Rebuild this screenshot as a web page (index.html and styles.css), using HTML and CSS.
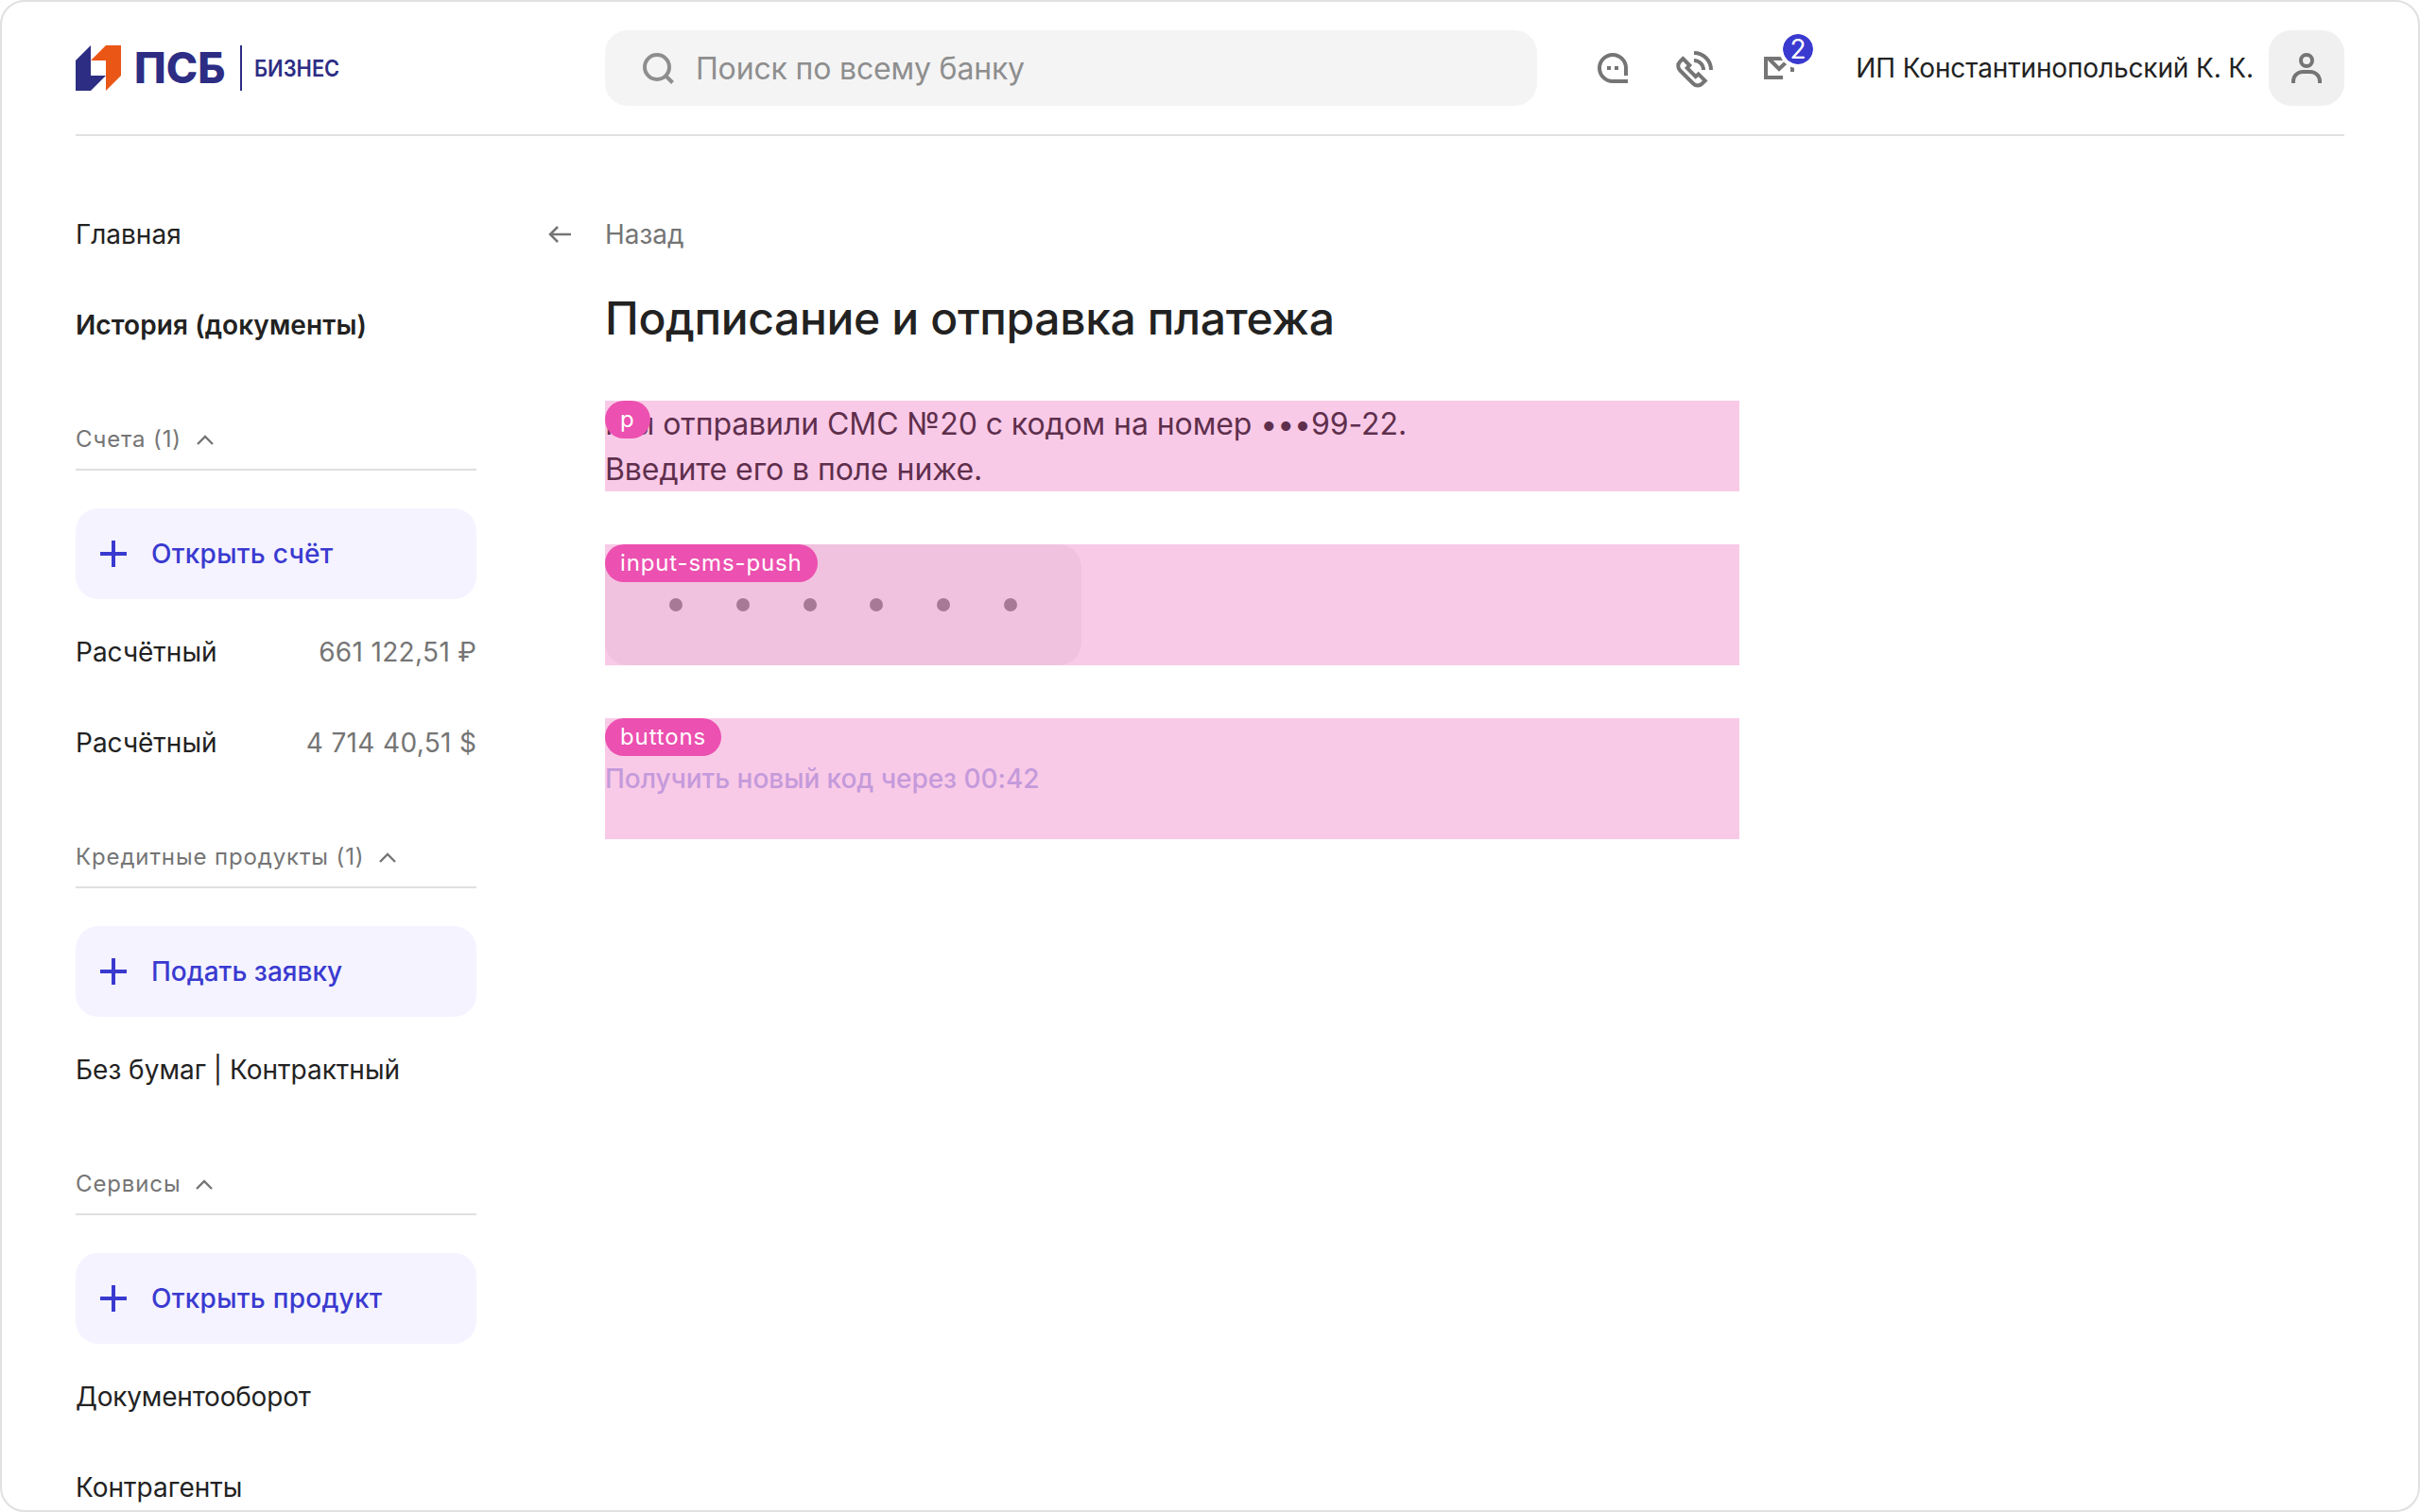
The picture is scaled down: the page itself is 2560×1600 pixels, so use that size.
FILE: index.html
```html
<!DOCTYPE html>
<html lang="ru">
<head>
<meta charset="utf-8">
<title>ПСБ Бизнес</title>
<link rel="stylesheet" href="styles.css">
</head>
<body>
<div class="frame">
  <header class="header">
    <div class="logo">
      <svg class="logo-mark" viewBox="0 0 48 48"><path fill="#2d2d84" d="M0 16 16 0v32h16L16 48H0z"/><path fill="#ea5616" d="M16 16 32 0h16v32L32 48V16z"/></svg>
      <span class="logo-name">ПСБ</span>
      <span class="logo-line"></span>
      <span class="logo-sub">БИЗНЕС</span>
    </div>
    <div class="search">
      <svg class="icon" viewBox="0 0 48 48" fill="none" stroke="#8e8e8e" stroke-width="4"><circle cx="23" cy="23" r="13"/><path d="m32 32 7.5 7.5"/></svg>
      <span>Поиск по всему банку</span>
    </div>
    <div class="actions">
      <svg class="icon" viewBox="0 0 48 48" fill="none" stroke="#757575" stroke-width="4"><path d="M38 32v-8a14 14 0 1 0-14 14h16"/><path d="M18 24h4M26 24h4"/></svg>
      <svg class="icon" viewBox="0 0 48 48" fill="none" stroke="#757575" stroke-width="4"><path d="M22 8a18 18 0 0 1 18 18M22 16a10 10 0 0 1 10 10"/><path d="M10.3 14 17.3 21 14.7 24 23.7 33 26.7 30.4 33.7 37.4 30.5 40.5a6.5 6.5 0 0 1-9.3 0L7.2 26.5a6.5 6.5 0 0 1 0-9.3z"/></svg>
      <div class="mail">
        <svg class="icon" viewBox="0 0 48 48" fill="none" stroke="#757575" stroke-width="4"><path d="M28 34H10V14h20M13.5 14.5 24 25l10-9.5M38 20v8"/></svg>
        <span class="count">2</span>
      </div>
    </div>
    <div class="user">
      <span class="user-name">ИП Константинопольский К. К.</span>
      <span class="avatar"><svg class="icon" viewBox="0 0 48 48" fill="none" stroke="#757575" stroke-width="4"><circle cx="24" cy="16" r="6"/><path d="M10 40v-2a10 10 0 0 1 10-10h8a10 10 0 0 1 10 10v2"/></svg></span>
    </div>
  </header>
  <div class="body">
    <nav class="sidebar">
      <a class="item">Главная</a>
      <a class="item item-active">История (документы)</a>
      <h2 class="group">Счета (1) <svg class="chevron" viewBox="0 0 20 12"><path d="m2 10 8-8 8 8"/></svg></h2>
      <a class="add add-wide"><svg class="plus" viewBox="0 0 28 28"><path d="M14 0v28M0 14h28"/></svg>Открыть счёт</a>
      <a class="item"><span>Расчётный</span><span class="sum">661 122,51 ₽</span></a>
      <a class="item"><span>Расчётный</span><span class="sum">4 714 40,51 $</span></a>
      <h2 class="group">Кредитные продукты (1) <svg class="chevron" viewBox="0 0 20 12"><path d="m2 10 8-8 8 8"/></svg></h2>
      <a class="add"><svg class="plus" viewBox="0 0 28 28"><path d="M14 0v28M0 14h28"/></svg>Подать заявку</a>
      <a class="item">Без бумаг | Контрактный</a>
      <h2 class="group">Сервисы <svg class="chevron" viewBox="0 0 20 12"><path d="m2 10 8-8 8 8"/></svg></h2>
      <a class="add add-wide"><svg class="plus" viewBox="0 0 28 28"><path d="M14 0v28M0 14h28"/></svg>Открыть продукт</a>
      <a class="item item-tight">Документооборот</a>
      <a class="item">Контрагенты</a>
    </nav>
    <main class="content">
      <a class="back"><svg class="arrow" viewBox="0 0 24 18"><path d="M24 9H2M10 1 2 9l8 8"/></svg>Назад</a>
      <h1 class="title">Подписание и отправка платежа</h1>
      <section class="block message">
        <p>Мы отправили СМС №20 с кодом на номер •••99-22.<br>Введите его в поле ниже.</p>
        <span class="tag">p</span>
      </section>
      <section class="block">
        <div class="code"><i></i><i></i><i></i><i></i><i></i><i></i></div>
        <span class="tag">input-sms-push</span>
      </section>
      <section class="block">
        <div class="resend">Получить новый код через 00:42</div>
        <span class="tag">buttons</span>
      </section>
    </main>
  </div>
</div>
</body>
</html>
```
FILE: styles.css
```css
* { box-sizing: border-box; }
body { margin: 0; background: #fff; font-family: Inter, "Liberation Sans", sans-serif; font-size: 28px; line-height: 40px; color: #222; }
.frame { width: 2560px; height: 1600px; padding: 0 78px; border: 2px solid #e0e0e0; border-radius: 26px; overflow: hidden; }
.header { display: flex; align-items: center; height: 142px; border-bottom: 2px solid #e0e0e0; white-space: nowrap; }
.icon { display: block; flex: none; width: 48px; height: 48px; }
.logo { display: flex; align-items: center; width: 560px; height: 48px; color: #2d2d84; }
.logo-mark { width: 48px; height: 48px; margin-right: 14px; }
.logo-name { width: 112px; font-size: 45px; font-weight: 800; }
.logo-line { width: 2px; height: 48px; background: #2d2d84; margin-right: 13px; }
.logo-sub { padding-top: 2px; font-size: 24px; font-weight: 600; transform: scaleX(0.91); transform-origin: left; }
.search { display: flex; align-items: center; gap: 16px; width: 986px; height: 80px; padding-left: 32px; border-radius: 24px; background: #f4f4f4; color: #8e8e8e; font-size: 32px; letter-spacing: -0.17px; }
.search span { padding-top: 1px; }
.actions { display: flex; gap: 40px; margin-left: 56px; }
.mail { position: relative; }
.count { position: absolute; left: 24px; top: -16px; width: 40px; height: 40px; border: 4px solid #fff; border-radius: 50%; background: #3a3ad0; background-clip: padding-box; color: #fff; font-size: 28px; line-height: 32px; text-align: center; }
.user { display: flex; align-items: center; gap: 16px; margin-left: auto; letter-spacing: -0.13px; }
.avatar { display: flex; align-items: center; justify-content: center; width: 80px; height: 80px; border-radius: 24px; background: #f0f0f0; }
.body { display: flex; }
.sidebar { width: 424px; padding-top: 56px; white-space: nowrap; }
.item { display: flex; justify-content: space-between; align-items: center; height: 96px; }
.item-active { font-weight: 600; letter-spacing: 0.08px; }
.item-tight { letter-spacing: -0.2px; }
.sum, .back { color: #757575; }
.sum { letter-spacing: 0.34px; margin-right: -0.34px; }
.group { display: flex; align-items: center; height: 74px; margin: 32px 0 40px; padding-top: 9px; border-bottom: 2px solid #e0e0e0; color: #757575; font-size: 24px; font-weight: 400; letter-spacing: 0.87px; }
.chevron { width: 20px; height: 12px; margin: 3px 0 0 15px; fill: none; stroke: #757575; stroke-width: 2.4; }
.add { display: flex; align-items: center; height: 96px; margin-bottom: 8px; padding-left: 26px; border-radius: 24px; background: #f5f3ff; color: #3a3ad0; font-weight: 500; }
.add-wide { letter-spacing: 0.26px; }
.plus { width: 28px; height: 28px; margin-right: 26px; stroke: #3a3ad0; stroke-width: 4; }
.content { width: 1260px; margin-left: 76px; padding-top: 84px; }
.back { display: flex; align-items: center; }
.arrow { width: 24px; height: 18px; margin-right: 36px; fill: none; stroke: #757575; stroke-width: 2.5; }
.title { margin: 37px 0 0 60px; font-size: 48px; line-height: 64px; font-weight: 500; letter-spacing: -0.35px; }
.block { position: relative; width: 1200px; height: 128px; margin: 56px 0 0 60px; }
.block::after { content: ""; position: absolute; inset: 0; background: rgba(236, 80, 176, 0.3); }
.message { height: 96px; margin-top: 55px; padding-top: 1px; font-size: 32px; line-height: 48px; letter-spacing: -0.08px; }
.message p { margin: 0; }
.tag { position: absolute; z-index: 1; left: 0; top: 0; height: 40px; padding: 0 16px; border-radius: 20px; background: #ec50b0; color: #fff; font-size: 24px; line-height: 40px; letter-spacing: 0.87px; }
.code { display: flex; align-items: center; gap: 56.8px; width: 504px; height: 128px; padding-left: 68px; border-radius: 24px; background: #f4f4f4; }
.code i { width: 14px; height: 14px; border-radius: 50%; background: #8c8c8c; }
.resend { line-height: 128px; color: #b3bbee; font-weight: 500; letter-spacing: -0.05px; }
```
